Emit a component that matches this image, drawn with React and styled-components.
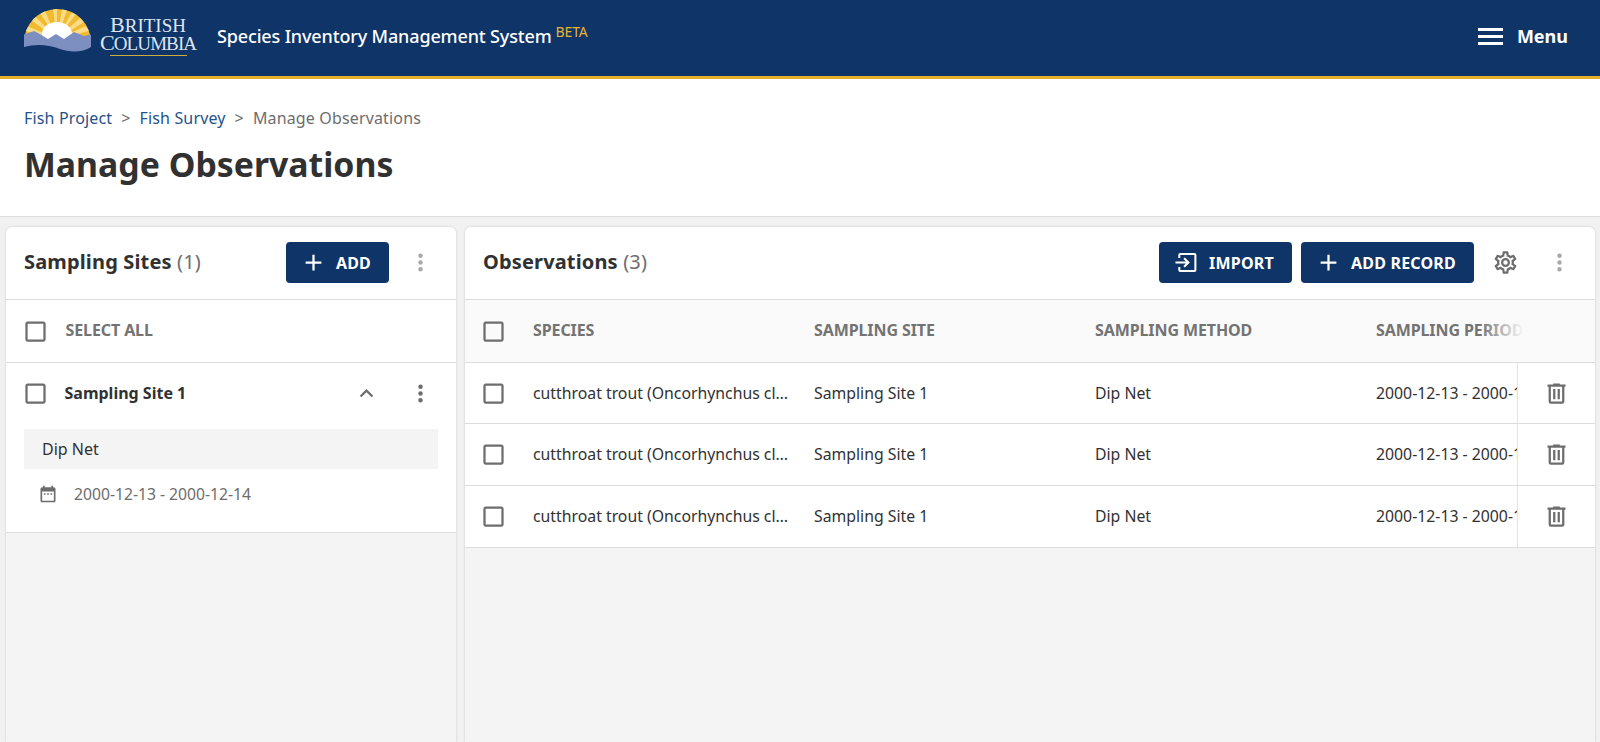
import React from 'react'
import styled, { createGlobalStyle } from 'styled-components'

const NAVY = '#0f3468'
const GREY = '#6d6d6d'

const icons = {
  plus: 'M19,13H13V19H11V13H5V11H11V5H13V11H19V13Z',
  dots: 'M12,16A2,2 0 0,1 14,18A2,2 0 0,1 12,20A2,2 0 0,1 10,18A2,2 0 0,1 12,16M12,10A2,2 0 0,1 14,12A2,2 0 0,1 12,14A2,2 0 0,1 10,12A2,2 0 0,1 12,10M12,4A2,2 0 0,1 14,6A2,2 0 0,1 12,8A2,2 0 0,1 10,6A2,2 0 0,1 12,4Z',
  trash: 'M9,3V4H4V6H5V19A2,2 0 0,0 7,21H17A2,2 0 0,0 19,19V6H20V4H15V3H9M7,6H17V19H7V6M9,8V17H11V8H9M13,8V17H15V8H13Z',
  cog: 'M12,8A4,4 0 0,1 16,12A4,4 0 0,1 12,16A4,4 0 0,1 8,12A4,4 0 0,1 12,8M12,10A2,2 0 0,0 10,12A2,2 0 0,0 12,14A2,2 0 0,0 14,12A2,2 0 0,0 12,10M10,22C9.75,22 9.54,21.82 9.5,21.58L9.13,18.93C8.5,18.68 7.96,18.34 7.44,17.94L4.95,18.95C4.73,19.03 4.46,18.95 4.34,18.73L2.34,15.27C2.21,15.05 2.27,14.78 2.46,14.63L4.57,12.97L4.5,12L4.57,11L2.46,9.37C2.27,9.22 2.21,8.95 2.34,8.73L4.34,5.27C4.46,5.05 4.73,4.96 4.95,5.05L7.44,6.05C7.96,5.66 8.5,5.32 9.13,5.07L9.5,2.42C9.54,2.18 9.75,2 10,2H14C14.25,2 14.46,2.18 14.5,2.42L14.87,5.07C15.5,5.32 16.04,5.66 16.56,6.05L19.05,5.05C19.27,4.96 19.54,5.05 19.66,5.27L21.66,8.73C21.79,8.95 21.73,9.22 21.54,9.37L19.43,11L19.5,12L19.43,13L21.54,14.63C21.73,14.78 21.79,15.05 21.66,15.27L19.66,18.73C19.54,18.95 19.27,19.04 19.05,18.95L16.56,17.95C16.04,18.34 15.5,18.68 14.87,18.93L14.5,21.58C14.46,21.82 14.25,22 14,22H10M11.25,4L10.88,6.61C9.68,6.86 8.62,7.5 7.85,8.39L5.44,7.35L4.69,8.65L6.8,10.2C6.4,11.37 6.4,12.64 6.8,13.8L4.68,15.36L5.43,16.66L7.86,15.62C8.63,16.5 9.68,17.14 10.87,17.38L11.24,20H12.76L13.13,17.39C14.32,17.14 15.37,16.5 16.14,15.62L18.57,16.66L19.32,15.36L17.2,13.81C17.6,12.64 17.6,11.37 17.2,10.2L19.31,8.65L18.56,7.35L16.15,8.39C15.38,7.5 14.32,6.86 13.12,6.62L12.75,4H11.25Z',
  chevronUp: 'M7.41,15.41L12,10.83L16.59,15.41L18,14L12,8L6,14L7.41,15.41Z',
  calendar: 'M19,4H18V2H16V4H8V2H6V4H5C3.9,4 3,4.9 3,6V20C3,21.1 3.9,22 5,22H19C20.1,22 21,21.1 21,20V6C21,4.9 20.1,4 19,4M19,20H5V9H19V20M7,11H9V13H7V11M11,11H13V13H11V11M15,11H17V13H15V11Z',
  importBox: 'M6.5,3.5H19C20,3.5 20.8,4.3 20.8,5.3V18.7C20.8,19.7 20,20.5 19,20.5H6.5C5.5,20.5 4.7,19.7 4.7,18.7V16H6.5V18.7H19V5.3H6.5V8H4.7V5.3C4.7,4.3 5.5,3.5 6.5,3.5ZM10.5,16.5L9.2,15.2L11.5,12.9H2.2V11.1H11.5L9.2,8.8L10.5,7.5L15,12Z',
  checkbox: 'M19,3H5C3.9,3 3,3.9 3,5V19C3,20.1 3.9,21 5,21H19C20.1,21 21,20.1 21,19V5C21,3.9 20.1,3 19,3M19,19H5V5H19V19Z',
}

const GlobalStyle = createGlobalStyle`
  html, body { margin: 0; padding: 0; height: 100%; }
  body {
    font-family: "Noto Sans", sans-serif;
    color: #313132;
    background: #f1f1f1;
    overflow: hidden;
  }
  * { box-sizing: border-box; }
`

const Page = styled.div`
  height: 742px;
  display: flex;
  flex-direction: column;
  overflow: hidden;
`
const TopBar = styled.header`
  flex: none;
  height: 79px;
  background: ${NAVY};
  border-bottom: 3px solid #e6b128;
  display: flex;
  align-items: center;
  padding: 0 24px 4px 24px;
`
const LogoWrap = styled.div`
  display: flex;
  align-items: flex-start;
  gap: 9px;
  margin-bottom: 8px;
`
const LogoWords = styled.div`
  font-family: "Liberation Serif", serif;
  color: #dfe5ee;
  font-size: 19px;
  line-height: 17px;
  text-align: center;
  width: 96px;
  margin-top: 7px;
  i {
    display: block;
    height: 1px;
    margin: 3px auto 0;
    width: 77px;
    background: #d0aa3a;
  }
`
const LogoLine = styled.span`
  display: block;
  white-space: nowrap;
  letter-spacing: ${p => p.$spacing}px;
  &::first-letter {
    font-size: 22px;
  }
`
const AppName = styled.div`
  margin-left: 21px;
  color: #fff;
  font-size: 18px;
  font-weight: 500;
  letter-spacing: -0.15px;
  white-space: nowrap;
  flex: 1;
  sup {
    color: #e8b230;
    font-size: 14px;
    font-weight: 400;
    margin-left: 4px;
    vertical-align: 6px;
    line-height: 0;
  }
`
const MenuToggle = styled.div`
  display: flex;
  align-items: center;
  color: #fff;
  font-weight: 700;
  font-size: 18px;
  gap: 14px;
  padding-right: 8px;
`
const Burger = styled.div`
  width: 25px;
  height: 17px;
  display: flex;
  flex-direction: column;
  justify-content: space-between;
  i {
    display: block;
    height: 3px;
    background: #fff;
  }
`
const TitleBlock = styled.section`
  flex: none;
  height: 138px;
  background: #fff;
  border-bottom: 1px solid #dcdcdc;
  padding: 27px 24px 0;
`
const Crumbs = styled.nav`
  display: flex;
  align-items: center;
  font-size: 16px;
  letter-spacing: 0.15px;
  line-height: 24px;
  color: ${GREY};
  gap: 9px;
`
const CrumbLink = styled.span`
  color: #24538c;
`
const PageTitle = styled.h1`
  margin: 11px 0 0;
  font-size: 33.8px;
  line-height: 46px;
  font-weight: 700;
  color: #313132;
`
const Columns = styled.main`
  flex: 1;
  min-height: 0;
  display: flex;
  gap: 9px;
  padding: 10px 5px 0 6px;
`
const Panel = styled.section`
  width: ${p => (p.$grow ? 'auto' : '450px')};
  flex: ${p => (p.$grow ? '1' : 'none')};
  min-width: 0;
  background: #f4f4f4;
  border-radius: 6px 6px 0 0;
  box-shadow: 0 0 2px rgba(0, 0, 0, 0.22);
  overflow: hidden;
`
const PanelHead = styled.div`
  height: 73px;
  background: #fff;
  border-bottom: 1px solid #dcdcdc;
  display: flex;
  align-items: center;
  padding-left: 18px;
  padding-bottom: 1px;
`
const PanelTitle = styled.h2`
  margin: 0 0 2px;
  flex: 1;
  font-size: 20px;
  letter-spacing: 0.15px;
  font-weight: 700;
  color: #313132;
  span {
    color: ${GREY};
    font-weight: 400;
  }
`
const NavyButton = styled.div`
  height: 41px;
  width: ${p => p.$w}px;
  background: ${NAVY};
  color: #fff;
  border-radius: 4px;
  display: flex;
  align-items: center;
  justify-content: center;
  gap: 9px;
  padding-right: 4px;
  font-size: 16px;
  letter-spacing: 0.2px;
  font-weight: 700;
  margin-right: ${p => p.$mr || 0}px;
`
const Glyph = styled.svg`
  flex: none;
  width: ${p => p.$size || 27}px;
  height: ${p => p.$size || 27}px;
  fill: ${p => p.$color || GREY};
  display: block;
`
const IconSlot = styled.div`
  width: ${p => p.$w}px;
  display: flex;
  justify-content: center;
  flex: none;
`
const SelectRow = styled.div`
  height: 63px;
  background: #fff;
  border-bottom: 1px solid #dcdcdc;
  display: flex;
  align-items: center;
  padding-left: 15.5px;
  gap: 17px;
`
const HeadLabel = styled.span`
  font-size: 16px;
  letter-spacing: -0.1px;
  font-weight: 700;
  color: #737373;
  white-space: nowrap;
  margin-bottom: 2px;
`
const SiteBlock = styled.div`
  background: #fff;
  border-bottom: 1px solid #dcdcdc;
  height: 170px;
`
const SiteRow = styled.div`
  height: 66px;
  display: flex;
  align-items: center;
  padding: 0 16px 5px 15.5px;
`
const SiteName = styled.div`
  flex: 1;
  font-size: 16px;
  font-weight: 700;
  color: #313132;
  margin: 0 0 1px 16px;
`
const SiteMenu = styled(IconSlot)`
  padding-left: 20px;
`
const MethodBand = styled.div`
  margin: 0 18px;
  height: 40px;
  background: #f4f4f4;
  display: flex;
  align-items: center;
  padding-left: 18px;
  font-size: 16px;
  color: #313132;
`
const PeriodRow = styled.div`
  margin: 5px 18px 0;
  height: 40px;
  display: flex;
  align-items: center;
  padding-left: 14px;
  gap: 16px;
  font-size: 15.7px;
  color: ${GREY};
`
const TableBox = styled.div`
  position: relative;
`
const Row = styled.div`
  display: grid;
  grid-template-columns: 53px repeat(4, 281px) 1fr;
  align-items: center;
  height: ${p => p.$h}px;
  background: ${p => (p.$head ? '#fafafa' : '#fff')};
  border-bottom: 1px solid #dcdcdc;
  padding-left: 15px;
  overflow: hidden;
`
const Cell = styled.div`
  font-size: 15.8px;
  line-height: 22px;
  margin-bottom: 1px;
  color: #313132;
  white-space: nowrap;
  overflow: hidden;
  text-overflow: ${p => (p.$ellipsis ? 'ellipsis' : 'clip')};
  padding-right: ${p => (p.$ellipsis ? '25px' : '0')};
`
const CheckCell = styled.div`
  display: flex;
  align-items: center;
`
const HeadFade = styled.div`
  position: absolute;
  top: 0;
  right: 0;
  width: 115px;
  height: 62px;
  background: linear-gradient(to right, rgba(250, 250, 250, 0), #fafafa 38%);
`
const ActionCell = styled.div`
  position: absolute;
  top: 0;
  right: 0;
  width: 78px;
  height: calc(100% - 1px);
  background: #fff;
  border-left: 1px solid #e4e4e4;
  display: flex;
  align-items: center;
  justify-content: center;
`
const BodyRow = styled.div`
  position: relative;
`

const Icon = ({ d, size, color }) => (
  <Glyph viewBox="0 0 24 24" $size={size} $color={color}>
    <path d={d} />
  </Glyph>
)

const Logo = () => (
  <LogoWrap>
    <svg width="67" height="44" viewBox="0 0 67 44">
      <defs>
        <clipPath id="sunClip">
          <path d="M0 33.5 A33.5 33.5 0 0 1 67 33.5 L67 36 L0 36 Z" />
        </clipPath>
      </defs>
      <g clipPath="url(#sunClip)">
        <rect x="0" y="0" width="67" height="36" fill="#f2bb2e" />
        <path d="M33 30 L29 0 L33 0 Z M33 30 L38 0 L43 1 Z M33 30 L16 4 L21 2 Z M33 30 L48 3 L52 5 Z M33 30 L7 11 L11 7 Z M33 30 L56 9 L60 13 Z M33 30 L1 22 L3 17 Z M33 30 L62 17 L65 22 Z" fill="#f8dc8a" />
        <ellipse cx="33" cy="25" rx="15" ry="12" fill="#fff" />
      </g>
      <path d="M0 25.5 L10 22 L14 24 L24 30 L32 25 L40 30 L50 23 L60 27 L67 25.5 L67 38 C58 44 45 43 36 40 C24 35 10 35 0 38 Z" fill="#7c8fc0" />
    </svg>
    <LogoWords>
      <LogoLine $spacing={0}>BRITISH</LogoLine>
      <LogoLine $spacing={-0.9}>COLUMBIA</LogoLine>
      <i />
    </LogoWords>
  </LogoWrap>
)

const species = 'cutthroat trout (Oncorhynchus clarkii)'
const rows = [61, 62, 62]

const App = () => (
  <Page>
    <GlobalStyle />
    <TopBar>
      <Logo />
      <AppName>
        Species Inventory Management System<sup>BETA</sup>
      </AppName>
      <MenuToggle>
        <Burger><i /><i /><i /></Burger>
        Menu
      </MenuToggle>
    </TopBar>
    <TitleBlock>
      <Crumbs>
        <CrumbLink>Fish Project</CrumbLink>
        <span>&gt;</span>
        <CrumbLink>Fish Survey</CrumbLink>
        <span>&gt;</span>
        <span>Manage Observations</span>
      </Crumbs>
      <PageTitle>Manage Observations</PageTitle>
    </TitleBlock>
    <Columns>
      <Panel>
        <PanelHead>
          <PanelTitle>Sampling Sites <span>(1)</span></PanelTitle>
          <NavyButton $w={103} $mr={11}>
            <Icon d={icons.plus} color="#fff" />
            ADD
          </NavyButton>
          <IconSlot $w={40}>
            <Icon d={icons.dots} color="#a8a8a8" />
          </IconSlot>
          <IconSlot $w={16} />
        </PanelHead>
        <SelectRow>
          <Icon d={icons.checkbox} />
          <HeadLabel>SELECT ALL</HeadLabel>
        </SelectRow>
        <SiteBlock>
          <SiteRow>
            <Icon d={icons.checkbox} />
            <SiteName>Sampling Site 1</SiteName>
            <Icon d={icons.chevronUp} />
            <SiteMenu $w={60}>
              <Icon d={icons.dots} />
            </SiteMenu>
          </SiteRow>
          <MethodBand>Dip Net</MethodBand>
          <PeriodRow>
            <Icon d={icons.calendar} size={20} />
            2000-12-13 - 2000-12-14
          </PeriodRow>
        </SiteBlock>
      </Panel>
      <Panel $grow>
        <PanelHead>
          <PanelTitle>Observations <span>(3)</span></PanelTitle>
          <NavyButton $w={133} $mr={9}>
            <Icon d={icons.importBox} color="#fff" />
            IMPORT
          </NavyButton>
          <NavyButton $w={173} $mr={13}>
            <Icon d={icons.plus} color="#fff" />
            ADD RECORD
          </NavyButton>
          <IconSlot $w={36}>
            <Icon d={icons.cog} />
          </IconSlot>
          <IconSlot $w={72}>
            <Icon d={icons.dots} color="#a8a8a8" />
          </IconSlot>
        </PanelHead>
        <TableBox>
          <Row $head $h={63}>
            <CheckCell><Icon d={icons.checkbox} /></CheckCell>
            <HeadLabel>SPECIES</HeadLabel>
            <HeadLabel>SAMPLING SITE</HeadLabel>
            <HeadLabel>SAMPLING METHOD</HeadLabel>
            <HeadLabel>SAMPLING PERIOD</HeadLabel>
          </Row>
          <HeadFade />
          {rows.map((h, i) => (
            <BodyRow key={i}>
              <Row $h={h}>
                <CheckCell><Icon d={icons.checkbox} /></CheckCell>
                <Cell $ellipsis>{species}</Cell>
                <Cell>Sampling Site 1</Cell>
                <Cell>Dip Net</Cell>
                <Cell>2000-12-13 - 2000-12-14</Cell>
              </Row>
              <ActionCell>
                <Icon d={icons.trash} />
              </ActionCell>
            </BodyRow>
          ))}
        </TableBox>
      </Panel>
    </Columns>
  </Page>
)

export default App
